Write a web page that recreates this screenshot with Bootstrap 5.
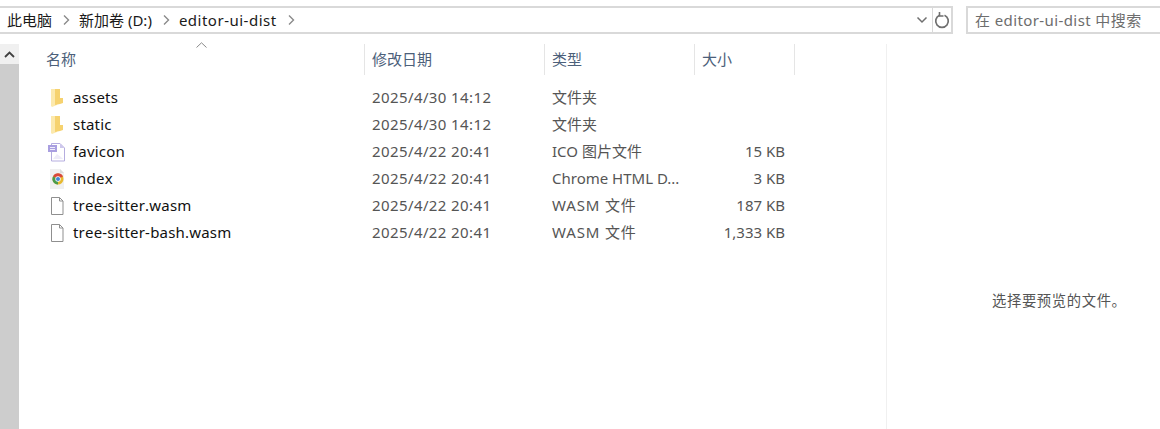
<!doctype html>
<html lang="zh">
<head>
<meta charset="utf-8">
<title>editor-ui-dist</title>
<link href="https://cdn.jsdelivr.net/npm/bootstrap@5.3.0/dist/css/bootstrap.min.css" rel="stylesheet">
<style>
html,body{height:429px;overflow:hidden;background:#fff}
body{font-family:"Noto Sans","Noto Sans CJK SC",sans-serif;font-size:15px;color:#1a1a1a;line-height:20px}
.addr-row{height:44px;padding-top:6px}
.addr-box{width:932px;height:28px;border:solid #d9d9d9;border-width:2px 0;padding-left:7px;white-space:nowrap}
.crumb-sep{width:8px;height:12px;margin:0 9px 0 10px;flex:none}
.crumb-latin{letter-spacing:.5px}
.addr-chev{margin-left:auto;margin-right:4px;flex:none}
.addr-tools{width:21px;height:28px;border:solid #d9d9d9;border-width:2px 2px 2px 1px;flex:none}
.search-box{margin-left:13px;flex:1;height:28px;border:2px solid #d9d9d9;border-right:0;padding-left:7px;color:#6d6d6d;font-size:15px;letter-spacing:.4px}
.main-area{height:385px}
.scroll-rail{width:19px;flex:none;background:#f0f0f0}
.scroll-up{height:20px;background:#f0f0f0}
.scroll-thumb{height:365px;background:#cdcdcd}
.file-pane{width:867px;padding-left:2px;flex:none;position:relative}
.sort-caret{position:absolute;left:177px;top:-2px;width:11px;height:6px}
.head-row{height:31px;color:#4c607a}
.col-name{width:344px;padding-left:25px;flex:none}
.col-date{width:180px;padding-left:7px;flex:none}
.col-type{width:150px;padding-left:7px;flex:none}
.col-size{width:100px;padding-left:7px;flex:none}
.head-row>div{height:31px;line-height:31px;border-right:1px solid #e5e5e5}
.file-list{margin-top:9px}
.file-row{height:27px;line-height:27px;white-space:nowrap}
.file-row .col-name{padding-left:27px;display:flex;align-items:center;color:#111;letter-spacing:.2px;font-kerning:none}
.file-row .col-date{color:#555;letter-spacing:.4px}
.file-row .col-type{color:#555}
.wasm-type{letter-spacing:.85px}
.file-row .col-size{text-align:right;padding-right:10px;color:#555}
.file-ico{width:18px;height:20px;margin-right:7px;flex:none}
.preview-pane{flex:1;border-left:1px solid #f0f0f0;color:#555;font-size:14.3px;letter-spacing:.65px;padding-top:247px;padding-left:105px;white-space:nowrap}
</style>
</head>
<body>
<div class="addr-row d-flex">
  <div class="addr-box d-flex align-items-center">
    <span>此电脑</span>
    <svg class="crumb-sep" viewBox="0 0 8 12"><path d="M2 1.500 6.500 6 2 10.500" fill="none" stroke="#8a8a8a" stroke-width="1.400"/></svg>
    <span>新加卷 (D:)</span>
    <svg class="crumb-sep" viewBox="0 0 8 12"><path d="M2 1.500 6.500 6 2 10.500" fill="none" stroke="#8a8a8a" stroke-width="1.400"/></svg>
    <span class="crumb-latin">editor-ui-dist</span>
    <svg class="crumb-sep" viewBox="0 0 8 12"><path d="M2 1.500 6.500 6 2 10.500" fill="none" stroke="#8a8a8a" stroke-width="1.400"/></svg>
    <svg class="addr-chev" width="12" height="8" viewBox="0 0 12 8"><path d="M1.500 1.500 6 6l4.500-4.500" fill="none" stroke="#6f6f6f" stroke-width="1.500"/></svg>
  </div>
  <div class="addr-tools d-flex align-items-center justify-content-center">
    <svg width="16" height="18" viewBox="0 0 16 18"><path d="M5.500 4.300A6.300 6.300 0 1 0 10.500 4.300" fill="none" stroke="#6f6f6f" stroke-width="1.700"/><path d="M5.500 1v4h4" fill="none" stroke="#6f6f6f" stroke-width="1.600"/></svg>
  </div>
  <div class="search-box d-flex align-items-center">在 editor-ui-dist 中搜索</div>
</div>
<div class="main-area d-flex">
  <div class="scroll-rail">
    <div class="scroll-up d-flex align-items-center justify-content-center">
      <svg width="11" height="7" viewBox="0 0 11 7"><path d="M1 6 5.500 1.500 10 6" fill="none" stroke="#404040" stroke-width="1.800"/></svg>
    </div>
    <div class="scroll-thumb"></div>
  </div>
  <div class="file-pane">
    <svg class="sort-caret" viewBox="0 0 11 6"><path d="M.5 5.500 5.500 .8l5 4.700" fill="none" stroke="#8a8a8a"/></svg>
    <div class="head-row d-flex">
      <div class="col-name">名称</div>
      <div class="col-date">修改日期</div>
      <div class="col-type">类型</div>
      <div class="col-size">大小</div>
    </div>
    <div class="file-list">
      <div class="file-row d-flex">
        <div class="col-name"><svg class="file-ico" viewBox="0 0 18 20"><path d="M3 1h6v16l-5 2-1-1z" fill="#fce9ad"/><path d="M7 1h5v9h3v5l-3 1-5 1z" fill="#f6d26f"/></svg>assets</div>
        <div class="col-date">2025/4/30 14:12</div><div class="col-type">文件夹</div><div class="col-size"></div>
      </div>
      <div class="file-row d-flex">
        <div class="col-name"><svg class="file-ico" viewBox="0 0 18 20"><path d="M3 1h6v16l-5 2-1-1z" fill="#fce9ad"/><path d="M7 1h5v9h3v5l-3 1-5 1z" fill="#f6d26f"/></svg>static</div>
        <div class="col-date">2025/4/30 14:12</div><div class="col-type">文件夹</div><div class="col-size"></div>
      </div>
      <div class="file-row d-flex">
        <div class="col-name"><svg class="file-ico" viewBox="0 0 18 20"><path d="M3.500 1.500H12l4.500 4.500v13h-13z" fill="#fff" stroke="#b5addf"/><path d="M12 1.500V6h4.500z" fill="#cdc7ec"/><rect x="0" y="3" width="9" height="7" fill="#a99fe0"/><path d="M2 5h5v1H2zM2 7h5v1H2z" fill="#efedfa"/><path d="M5 17l4-5 4 3 2 2z" fill="#eeecf8"/></svg>favicon</div>
        <div class="col-date">2025/4/22 20:41</div><div class="col-type">ICO 图片文件</div><div class="col-size">15 KB</div>
      </div>
      <div class="file-row d-flex">
        <div class="col-name"><svg class="file-ico" viewBox="0 0 18 20"><path d="M2 0h10l4 4v16H2z" fill="#f0f0f0"/><path d="M12 0v4h4z" fill="#dcdcdc"/><circle cx="10" cy="10" r="5.500" fill="#e7b92f"/><path d="M10 10 5 7.500a5.500 5.500 0 0 1 10 0z" fill="#d9483b"/><path d="M10 10 5 7.500a5.500 5.500 0 0 0 5 8z" fill="#4a9b4c"/><circle cx="10" cy="10" r="2.700" fill="#fff"/><circle cx="10" cy="10" r="2" fill="#4285d4"/></svg>index</div>
        <div class="col-date">2025/4/22 20:41</div><div class="col-type">Chrome HTML D...</div><div class="col-size">3 KB</div>
      </div>
      <div class="file-row d-flex">
        <div class="col-name"><svg class="file-ico" viewBox="0 0 18 20"><path d="M3.500 1.500h8l3.500 3.500v13.500H3.500z" fill="#fff" stroke="#8f8f8f"/><path d="M11.500 1.500V5H15" fill="none" stroke="#8f8f8f"/></svg>tree-sitter.wasm</div>
        <div class="col-date">2025/4/22 20:41</div><div class="col-type wasm-type">WASM 文件</div><div class="col-size">187 KB</div>
      </div>
      <div class="file-row d-flex">
        <div class="col-name"><svg class="file-ico" viewBox="0 0 18 20"><path d="M3.500 1.500h8l3.500 3.500v13.500H3.500z" fill="#fff" stroke="#8f8f8f"/><path d="M11.500 1.500V5H15" fill="none" stroke="#8f8f8f"/></svg>tree-sitter-bash.wasm</div>
        <div class="col-date">2025/4/22 20:41</div><div class="col-type wasm-type">WASM 文件</div><div class="col-size">1,333 KB</div>
      </div>
    </div>
  </div>
  <div class="preview-pane">选择要预览的文件。</div>
</div>
</body>
</html>
